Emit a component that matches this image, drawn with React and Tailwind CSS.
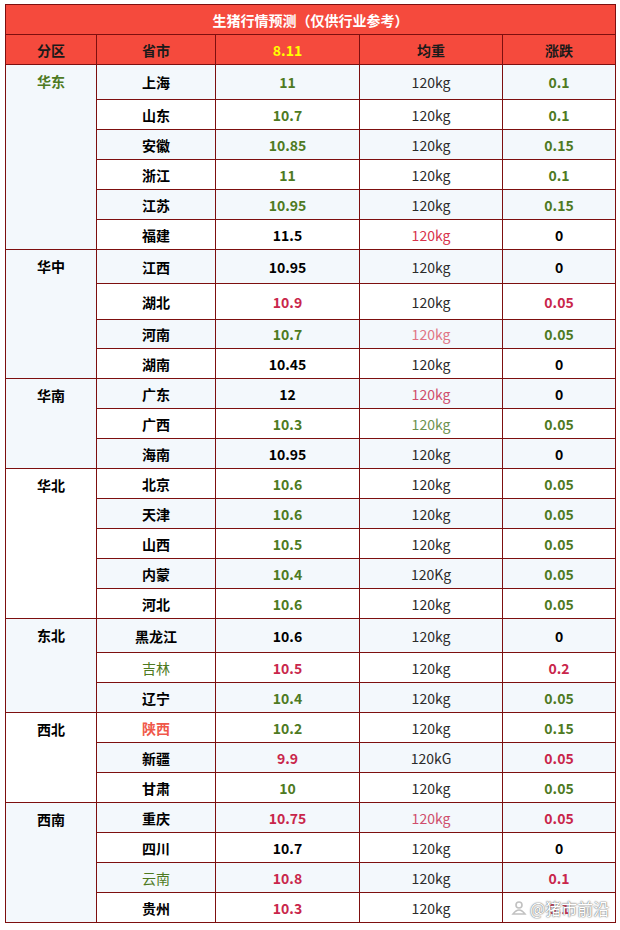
import React from "react";

const G = "text-[#4e7a22]";
const R = "text-[#c9264b]";
const K = "text-black";
const KG = "text-[#2b2b2b]";
const RW = "text-[#d8344c]";
const PW = "text-[#e07585]";
const PR = "text-[#cf4e6c]";
const GW = "text-[#6d9150]";

// [省市, 省市色, 价格, 价格色, 均重, 均重色, 涨跌, 涨跌色, 行高]
const groups = [
  {
    name: "华东",
    color: G,
    rows: [
      ["上海", K, "11", G, "120kg", KG, "0.1", G, 35],
      ["山东", K, "10.7", G, "120kg", KG, "0.1", G, 30],
      ["安徽", K, "10.85", G, "120kg", KG, "0.15", G, 30],
      ["浙江", K, "11", G, "120kg", KG, "0.1", G, 30],
      ["江苏", K, "10.95", G, "120kg", KG, "0.15", G, 30],
      ["福建", K, "11.5", K, "120kg", RW, "0", K, 30],
    ],
  },
  {
    name: "华中",
    color: K,
    rows: [
      ["江西", K, "10.95", K, "120kg", KG, "0", K, 34],
      ["湖北", K, "10.9", R, "120kg", KG, "0.05", R, 36],
      ["河南", K, "10.7", G, "120kg", PW, "0.05", G, 29],
      ["湖南", K, "10.45", K, "120kg", KG, "0", K, 30],
    ],
  },
  {
    name: "华南",
    color: K,
    rows: [
      ["广东", K, "12", K, "120kg", PR, "0", K, 30],
      ["广西", K, "10.3", G, "120kg", GW, "0.05", G, 30],
      ["海南", K, "10.95", K, "120kg", KG, "0", K, 30],
    ],
  },
  {
    name: "华北",
    color: K,
    rows: [
      ["北京", K, "10.6", G, "120kg", KG, "0.05", G, 30],
      ["天津", K, "10.6", G, "120kg", KG, "0.05", G, 30],
      ["山西", K, "10.5", G, "120kg", KG, "0.05", G, 30],
      ["内蒙", K, "10.4", G, "120Kg", KG, "0.05", G, 30],
      ["河北", K, "10.6", G, "120kg", KG, "0.05", G, 30],
    ],
  },
  {
    name: "东北",
    color: K,
    rows: [
      ["黑龙江", K, "10.6", K, "120kg", KG, "0", K, 34],
      ["吉林", G, "10.5", R, "120kg", KG, "0.2", R, 30],
      ["辽宁", K, "10.4", G, "120kg", KG, "0.05", G, 30],
    ],
  },
  {
    name: "西北",
    color: K,
    rows: [
      ["陕西", "text-[#f0584a]", "10.2", G, "120kg", KG, "0.15", G, 30],
      ["新疆", K, "9.9", R, "120kG", KG, "0.05", R, 30],
      ["甘肃", K, "10", G, "120kg", KG, "0.05", G, 30],
    ],
  },
  {
    name: "西南",
    color: K,
    rows: [
      ["重庆", K, "10.75", R, "120kg", PR, "0.05", R, 30],
      ["四川", K, "10.7", K, "120kg", KG, "0", K, 30],
      ["云南", G, "10.8", R, "120kg", KG, "0.1", R, 30],
      ["贵州", K, "10.3", R, "120kg", KG, "0.1", R, 30],
    ],
  },
];

const cell = "border border-[#7d0f0f] text-center align-middle p-0";

const App = () => {
  let idx = 0;
  return (
    <div className="w-[620px] h-[930px] bg-white pt-[4px] pl-[5px] font-['Noto_Sans_CJK_SC',sans-serif] text-[14px] leading-[20px] relative">
      <table className="w-[610px] table-fixed border-collapse">
        <colgroup>
          <col className="w-[91px]" />
          <col className="w-[119px]" />
          <col className="w-[144px]" />
          <col className="w-[143px]" />
          <col className="w-[113px]" />
        </colgroup>
        <thead>
          <tr className="h-[30px] bg-[#f54a3d]">
            <th colSpan={5} className={`${cell} text-white font-bold`}>
              生猪行情预测（仅供行业参考）
            </th>
          </tr>
          <tr className="h-[30px] bg-[#f54a3d] text-[#1a1a1a] font-bold">
            <th className={cell}>分区</th>
            <th className={cell}>省市</th>
            <th className={`${cell} text-[#ffff00]`}>8.11</th>
            <th className={cell}>均重</th>
            <th className={cell}>涨跌</th>
          </tr>
        </thead>
        <tbody>
          {groups.map((g) =>
            g.rows.map((r, i) => {
              idx += 1;
              const bg = idx % 2 === 1 ? "bg-[#f3f8fc]" : "bg-white";
              const plain = r[1] === G;
              return (
                <tr key={r[0]} className={bg} style={{ height: r[8] }}>
                  {i === 0 && (
                    <td
                      rowSpan={g.rows.length}
                      className={`${cell} align-top pt-[6px] font-bold ${g.color}`}
                    >
                      {g.name}
                    </td>
                  )}
                  <td className={`${cell} ${plain ? "font-normal" : "font-bold"} ${r[1]}`}>
                    {r[0]}
                  </td>
                  <td className={`${cell} font-bold ${r[3]}`}>{r[2]}</td>
                  <td className={`${cell} ${r[5]}`}>{r[4]}</td>
                  <td className={`${cell} font-bold ${r[7]}`}>{r[6]}</td>
                </tr>
              );
            })
          )}
        </tbody>
      </table>

      {/* watermark */}
      <div className="absolute left-[511px] top-[898px] flex items-center gap-[3px] text-white text-[16px] leading-[20px] [text-shadow:0_0_2px_#777,0_0_1px_#555]">
        <svg width="16" height="16" viewBox="0 0 16 16" className="opacity-90">
          <circle cx="8" cy="5" r="3" fill="none" stroke="#bbb" strokeWidth="1.6" />
          <path d="M2 14 Q8 6 14 14 Z" fill="none" stroke="#bbb" strokeWidth="1.6" />
        </svg>
        <span>@猪市前沿</span>
      </div>
    </div>
  );
};

export default App;
